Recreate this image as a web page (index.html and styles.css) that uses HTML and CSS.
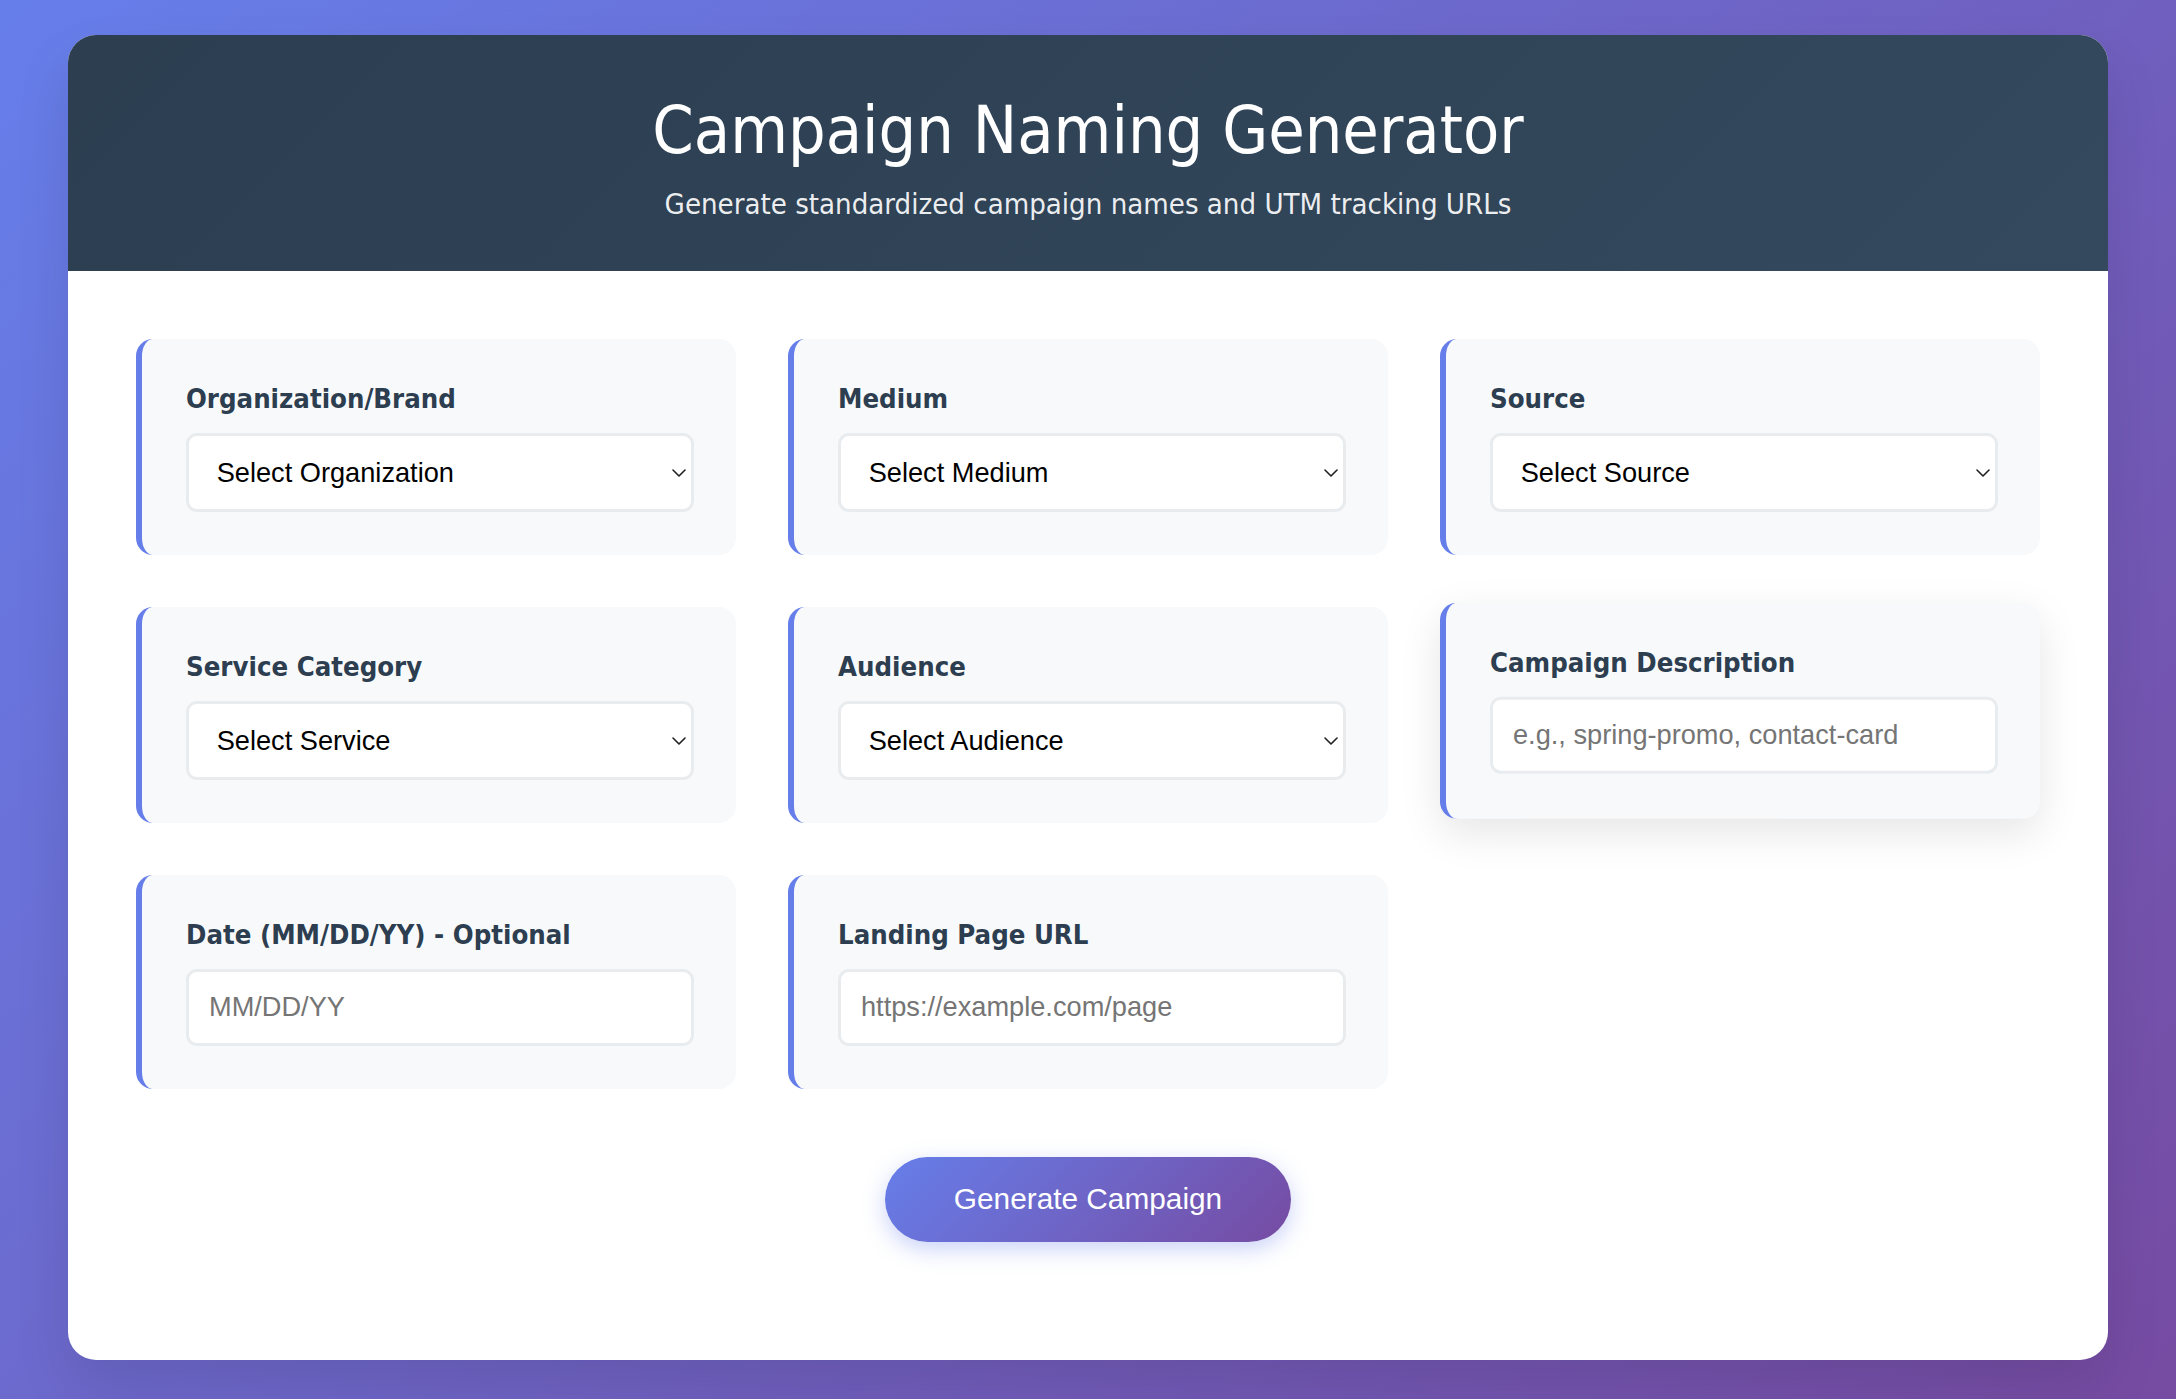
FILE: index.html
```html
<!DOCTYPE html>
<html lang="en">
<head>
<meta charset="utf-8">
<title>Campaign Naming Generator</title>
<link rel="stylesheet" href="styles.css">
</head>
<body>
<div class="app">
  <header class="app-header">
    <h1 class="app-title">Campaign Naming Generator</h1>
    <p class="app-subtitle">Generate standardized campaign names and UTM tracking URLs</p>
  </header>
  <main class="app-body">
    <div class="field-grid">
      <div class="field-card">
        <label class="field-label">Organization/Brand</label>
        <div class="select-wrap">
          <select class="field-select"><option>Select Organization</option></select>
          <svg class="chevron" viewBox="0 0 14 8" width="14" height="8"><path d="M1 1l6 6 6-6" fill="none" stroke="#222" stroke-width="1.6" stroke-linecap="round" stroke-linejoin="round"/></svg>
        </div>
      </div>
      <div class="field-card">
        <label class="field-label">Medium</label>
        <div class="select-wrap">
          <select class="field-select"><option>Select Medium</option></select>
          <svg class="chevron" viewBox="0 0 14 8" width="14" height="8"><path d="M1 1l6 6 6-6" fill="none" stroke="#222" stroke-width="1.6" stroke-linecap="round" stroke-linejoin="round"/></svg>
        </div>
      </div>
      <div class="field-card">
        <label class="field-label">Source</label>
        <div class="select-wrap">
          <select class="field-select"><option>Select Source</option></select>
          <svg class="chevron" viewBox="0 0 14 8" width="14" height="8"><path d="M1 1l6 6 6-6" fill="none" stroke="#222" stroke-width="1.6" stroke-linecap="round" stroke-linejoin="round"/></svg>
        </div>
      </div>
      <div class="field-card">
        <label class="field-label">Service Category</label>
        <div class="select-wrap">
          <select class="field-select"><option>Select Service</option></select>
          <svg class="chevron" viewBox="0 0 14 8" width="14" height="8"><path d="M1 1l6 6 6-6" fill="none" stroke="#222" stroke-width="1.6" stroke-linecap="round" stroke-linejoin="round"/></svg>
        </div>
      </div>
      <div class="field-card">
        <label class="field-label">Audience</label>
        <div class="select-wrap">
          <select class="field-select"><option>Select Audience</option></select>
          <svg class="chevron" viewBox="0 0 14 8" width="14" height="8"><path d="M1 1l6 6 6-6" fill="none" stroke="#222" stroke-width="1.6" stroke-linecap="round" stroke-linejoin="round"/></svg>
        </div>
      </div>
      <div class="field-card is-hovered">
        <label class="field-label">Campaign Description</label>
        <input class="field-input" type="text" placeholder="e.g., spring-promo, contact-card">
      </div>
      <div class="field-card">
        <label class="field-label">Date (MM/DD/YY) - Optional</label>
        <input class="field-input" type="text" placeholder="MM/DD/YY">
      </div>
      <div class="field-card">
        <label class="field-label">Landing Page URL</label>
        <input class="field-input" type="text" placeholder="https://example.com/page">
      </div>
    </div>
    <div class="actions">
      <button class="generate-btn" type="button">Generate Campaign</button>
    </div>
  </main>
</div>
</body>
</html>
```
FILE: styles.css
```css
* {
  box-sizing: border-box;
}

html {
  height: 100%;
}

body {
  margin: 0;
  min-height: 100%;
  padding: 34.5px 68px 38px;
  background: linear-gradient(135deg, #667eea 0%, #764ba2 100%);
  font-family: "DejaVu Sans Condensed", "DejaVu Sans", sans-serif;
}

.app {
  background: #ffffff;
  border-radius: 28px;
  overflow: hidden;
  box-shadow: 0 28px 56px rgba(0, 0, 0, 0.1);
}

.app-header {
  background: linear-gradient(135deg, #2c3e50 0%, #34495e 100%);
  color: #ffffff;
  text-align: center;
  padding: 56px 40px 46.7px;
}

.app-title {
  margin: 0 0 14.6px;
  font-size: 66px;
  line-height: 79.2px;
  font-weight: 400;
}

.app-subtitle {
  margin: 0;
  font-size: 29.1px;
  line-height: 40px;
  color: rgba(255, 255, 255, 0.92);
}

.app-body {
  padding: 68.4px 68px 68px;
}

.field-grid {
  display: grid;
  grid-template-columns: repeat(3, 1fr);
  column-gap: 52px;
  row-gap: 52.5px;
}

.field-card {
  background: #f8f9fa;
  border-left: 6px solid #667eea;
  border-radius: 17px;
  padding: 42px 42px 43px 44px;
}

.field-card.is-hovered {
  transform: translateY(-4.3px);
  box-shadow: 0 14px 42px rgba(0, 0, 0, 0.1);
}

.field-label {
  display: block;
  font-size: 27.3px;
  line-height: 36px;
  font-weight: 700;
  color: #2c3e50;
  margin-bottom: 15.4px;
}

.select-wrap {
  position: relative;
}

.field-select,
.field-input {
  display: block;
  width: 100%;
  font-family: "Liberation Sans", Arial, sans-serif;
  font-size: 27.2px;
  border: 3px solid #e9ecef;
  border-radius: 11px;
  background: #ffffff;
  color: #000000;
  outline: none;
}

.field-select {
  appearance: none;
  -webkit-appearance: none;
  height: 79px;
  padding: 0 50px 0 27.7px;
}

.field-input {
  height: 77px;
  padding: 0 20px;
}

.field-input::placeholder {
  color: #757575;
}

.chevron {
  position: absolute;
  right: 8.5px;
  top: 36.5px;
  width: 14px;
  height: 8px;
  pointer-events: none;
}

.actions {
  display: flex;
  justify-content: center;
  margin-top: 68.4px;
  margin-bottom: 50px;
}

.generate-btn {
  height: 85px;
  padding: 0 69px;
  border: none;
  border-radius: 999px;
  background: linear-gradient(135deg, #667eea 0%, #764ba2 100%);
  color: #ffffff;
  font-family: "Liberation Sans", Arial, sans-serif;
  font-size: 29.8px;
  box-shadow: 0 7px 22px rgba(102, 126, 234, 0.35);
  cursor: pointer;
}
```
